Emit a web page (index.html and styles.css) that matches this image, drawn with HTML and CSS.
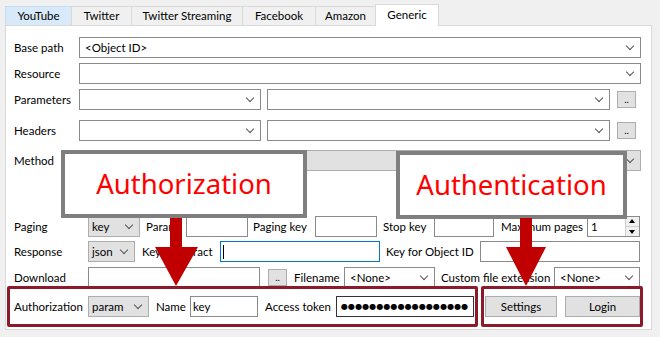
FILE: index.html
```html
<!DOCTYPE html>
<html>
<head>
  <meta charset="UTF-8"/>
  <title>Generic</title>
  <link rel="stylesheet" href="styles.css">
</head>
<body>
  <div class="tabs">
    <div class="tab hover" style="width: 67px">YouTube</div>
    <div class="tab" style="width: 61px">Twitter</div>
    <div class="tab" style="width: 112px">Twitter Streaming</div>
    <div class="tab" style="width: 74px">Facebook</div>
    <div class="tab" style="width: 61px">Amazon</div>
    <div class="tab selected" style="width: 64px">Generic</div>
  </div>

  <div class="panel">
    <div class="row r1">
      <div class="lbl w65">Base path</div>
      <div class="combo grow">&lt;Object ID&gt;<span class="chev"></span></div>
    </div>
    <div class="row r2">
      <div class="lbl w65">Resource</div>
      <div class="combo grow"><span class="chev"></span></div>
    </div>
    <div class="row r3 short">
      <div class="lbl w65">Parameters</div>
      <div class="combo" style="width: 182px"><span class="chev"></span></div>
      <div class="combo" style="width: 343px; margin-left: 6px"><span class="chev"></span></div>
      <div class="dots">..</div>
    </div>
    <div class="row r4 short">
      <div class="lbl w65">Headers</div>
      <div class="combo" style="width: 182px"><span class="chev"></span></div>
      <div class="combo" style="width: 343px; margin-left: 6px"><span class="chev"></span></div>
      <div class="dots">..</div>
    </div>
    <div class="row r5">
      <div class="lbl w65">Method</div>
      <div class="combo list grow"><span class="chev"></span></div>
    </div>

    <div class="row r6">
      <div class="lbl w74">Paging</div>
      <div class="combo list" style="width: 52px">key<span class="chev"></span></div>
      <div class="lbl" style="width: 46px; padding-left: 6px">Param</div>
      <div class="text" style="width: 62px"></div>
      <div class="lbl" style="width: 67px; padding-left: 5px">Paging key</div>
      <div class="text" style="width: 62px"></div>
      <div class="lbl" style="width: 57px; padding-left: 6px">Stop key</div>
      <div class="text" style="width: 60px"></div>
      <div class="lbl" style="width: 93px; padding-left: 7px">Maximum pages</div>
      <div class="spin">
        <span class="value">1</span>
        <span class="updown">
          <span class="up"></span>
          <span class="down"></span>
        </span>
      </div>
    </div>
    <div class="row r7">
      <div class="lbl w74">Response</div>
      <div class="combo list" style="width: 47px">json<span class="chev"></span></div>
      <div class="lbl" style="width: 85px; padding-left: 7px">Key to extract</div>
      <div class="text focus" style="width: 160px"><span class="caret"></span></div>
      <div class="lbl" style="width: 100px; padding-left: 6px">Key for Object ID</div>
      <div class="text" style="width: 160px"></div>
    </div>
    <div class="row r8">
      <div class="lbl w74">Download</div>
      <div class="text" style="width: 172px"></div>
      <div class="dots" style="margin-left: 8px">..</div>
      <div class="lbl" style="width: 57px; padding-left: 7px">Filename</div>
      <div class="combo" style="width: 91px">&lt;None&gt;<span class="chev"></span></div>
      <div class="lbl" style="width: 119px; padding-left: 6px">Custom file extension</div>
      <div class="combo" style="width: 86px">&lt;None&gt;<span class="chev"></span></div>
    </div>
    <div class="row r9">
      <div class="lbl w74">Authorization</div>
      <div class="combo list" style="width: 61px">param<span class="chev"></span></div>
      <div class="lbl" style="width: 41px; padding-left: 7px">Name</div>
      <div class="text" style="width: 68px">key</div>
      <div class="lbl" style="width: 78px; padding-left: 7px">Access token</div>
      <div class="text password" style="width: 138px">●●●●●●●●●●●●●●●●●●</div>
      <div class="button" style="width: 72px; margin-left: 11px">Settings</div>
      <div class="button" style="width: 75px; margin-left: 8px">Login</div>
    </div>
  </div>

  <!-- annotations drawn over the form -->
  <div class="callout" style="left: 61px; top: 150px; width: 246px">Authorization</div>
  <div class="callout" style="left: 396px; top: 151px; width: 231px">Authentication</div>

  <div class="redbox" style="left: 7px; width: 471px"></div>
  <div class="redbox" style="left: 481px; width: 162px"></div>

  <svg class="arrow" style="left: 155px" width="44" height="68" viewBox="0 0 44 68">
    <rect x="15" y="0" width="12" height="30" fill="#c00000"/>
    <polygon points="0,29 43,29 21,68" fill="#c00000"/>
  </svg>
  <svg class="arrow" style="left: 506px" width="41" height="68" viewBox="0 0 41 68">
    <rect x="14" y="0" width="12" height="30" fill="#c00000"/>
    <polygon points="0,29 40,29 20,68" fill="#c00000"/>
  </svg>
</body>
</html>
```

FILE: styles.css
```css
body {
  margin: 0;
  width: 660px;
  height: 337px;
  overflow: hidden;
  background: #f0f0f0;
  font-family: Lato, "Noto Sans", sans-serif;
  font-size: 11.5px;
  color: #000;
}

/* tabs */
.tabs {
  display: flex;
  align-items: flex-end;
  height: 25px;
  padding-left: 5px;
}
.tab {
  box-sizing: border-box;
  height: 19px;
  line-height: 17px;
  text-align: center;
  border: 1px solid #d9d9d9;
  border-bottom: none;
  margin-right: -1px;
  background: #f0f0f0;
}
.tab.hover {
  background: #d8eaf9;
  border-color: #c4dcf2;
}
.tab.selected {
  height: 22px;
  line-height: 20px;
  background: #fff;
  position: relative;
  margin-bottom: -1px;
  z-index: 1;
}

/* panel */
.panel {
  box-sizing: border-box;
  width: 647px;
  height: 305px;
  margin-left: 5px;
  padding: 11px 10px 0 8px;
  background: #fff;
  border: 1px solid #d9d9d9;
}
.row {
  display: flex;
  align-items: center;
  height: 21px;
}
.r2 { margin-top: 5px; }
.r3 { margin-top: 5px; }
.r4 { margin-top: 10px; }
.r5 { margin-top: 9px; }
.r6 { margin-top: 45px; }
.r7 { margin-top: 4px; }
.r8 { margin-top: 5px; }
.r9 { margin-top: 8px; }

.lbl {
  box-sizing: border-box;
  flex: none;
  white-space: nowrap;
}
.w65 { width: 65px; }
.w74 { width: 74px; }
.grow { flex: 1; }

/* controls */
.combo, .text, .button, .dots, .spin {
  box-sizing: border-box;
  flex: none;
  height: 21px;
  line-height: 19px;
  white-space: nowrap;
  overflow: hidden;
}
.combo {
  position: relative;
  padding-left: 5px;
  border: 1px solid #8a8a8a;
  background: #fff;
}
.combo.grow { flex: 1; }
.combo.list {
  padding-left: 3px;
  background: #e1e1e1;
  border-color: #adadad;
}
.chev {
  position: absolute;
  right: 7px;
  top: 5px;
  width: 5px;
  height: 5px;
  border-right: 1px solid #555;
  border-bottom: 1px solid #555;
  transform: rotate(45deg);
}
.text {
  position: relative;
  padding-left: 2px;
  border: 1px solid #8a8a8a;
  background: #fff;
}
.text.focus {
  border-color: #0078d7;
}
.caret {
  position: absolute;
  left: 2px;
  top: 3px;
  width: 1px;
  height: 14px;
  background: #000;
}
.text.password {
  border-color: #333;
  padding-left: 4px;
  font-family: "DejaVu Sans", sans-serif;
  font-size: 8px;
  letter-spacing: 0.1px;
  line-height: 19px;
}
.dots {
  width: 19px;
  height: 17px;
  line-height: 15px;
  margin-left: 7px;
  text-align: center;
  font-size: 10px;
  background: #e1e1e1;
  border: 1px solid #adadad;
}
.button {
  text-align: center;
  background: #e1e1e1;
  border: 1px solid #adadad;
}

/* numeric up-down */
.spin {
  display: flex;
  width: 53px;
  border: 1px solid #8a8a8a;
  background: #fff;
}
.spin .value {
  flex: 1;
  padding-left: 3px;
}
.updown {
  display: flex;
  flex-direction: column;
  width: 13px;
  border-left: 1px solid #cfcfcf;
}
.up, .down {
  flex: 1;
  position: relative;
  background: #f0f0f0;
}
.down {
  border-top: 1px solid #cfcfcf;
}
.up::after, .down::after {
  content: "";
  position: absolute;
  left: 3px;
  border-left: 3px solid transparent;
  border-right: 3px solid transparent;
}
.up::after {
  top: 2px;
  border-bottom: 4px solid #000;
}
.down::after {
  top: 3px;
  border-top: 4px solid #000;
}

/* annotations */
.callout {
  position: absolute;
  box-sizing: border-box;
  height: 68px;
  border: 4px solid #7f7f7f;
  background: #fff;
  color: #ff0000;
  font-family: "Noto Sans", sans-serif;
  font-size: 27.5px;
  line-height: 60px;
  text-align: center;
}
.redbox {
  position: absolute;
  top: 286px;
  box-sizing: border-box;
  height: 41px;
  border: 3px solid #8b1b2b;
  border-radius: 2px;
}
.arrow {
  position: absolute;
  top: 218px;
}
```
